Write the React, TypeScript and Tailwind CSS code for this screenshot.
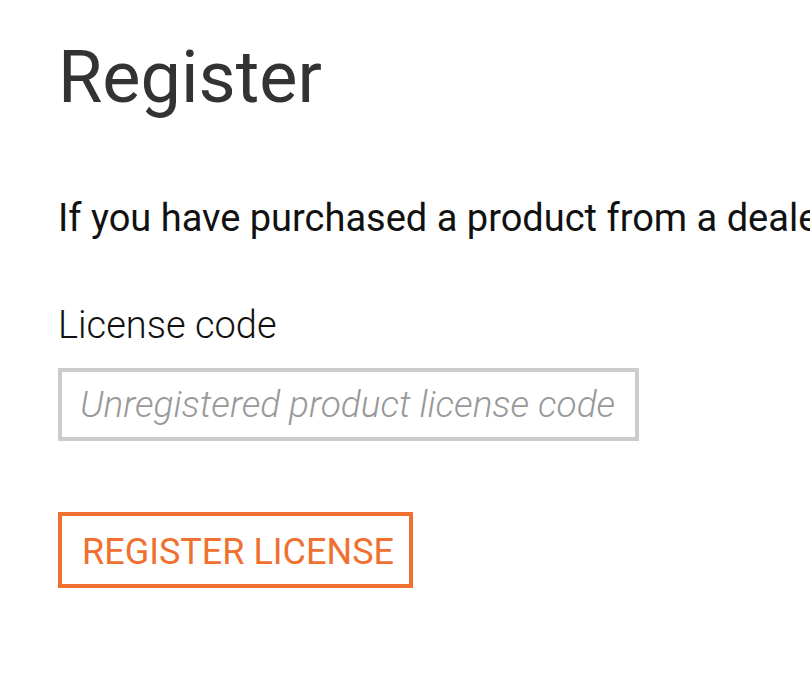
export default function App() {
  return (
    <div className="min-h-screen w-full overflow-hidden bg-white font-['Roboto',sans-serif]">
      <div className="pl-[58px] pt-[38px]">
        <h1 className="whitespace-nowrap text-[72px] font-normal leading-[80px] text-[#333333]">
          Register
        </h1>
        <p className="mt-[73px] whitespace-nowrap text-[38px] leading-[54px] text-[#111111]">
          If you have purchased a product from a dealer, enter the license code you received below.
        </p>
        <label className="mt-[53px] block text-[38px] font-light leading-[54px] text-[#111111]">
          License code
        </label>
        <input
          type="text"
          placeholder="Unregistered product license code"
          className="mt-[16px] block h-[73px] w-[581px] border-4 border-[#cccccc] bg-white pl-[18px] pr-[16px] text-[37px] font-light text-[#333333] outline-none placeholder:italic placeholder:text-[#999999]"
        />
        <button
          type="button"
          className="mt-[71px] flex h-[76px] items-center border-4 border-[#f0702f] bg-white pb-0 pl-[20px] pr-[15px] pt-[4px] text-[36px] font-normal uppercase text-[#f0702f]"
        >
          Register license
        </button>
      </div>
    </div>
  );
}
